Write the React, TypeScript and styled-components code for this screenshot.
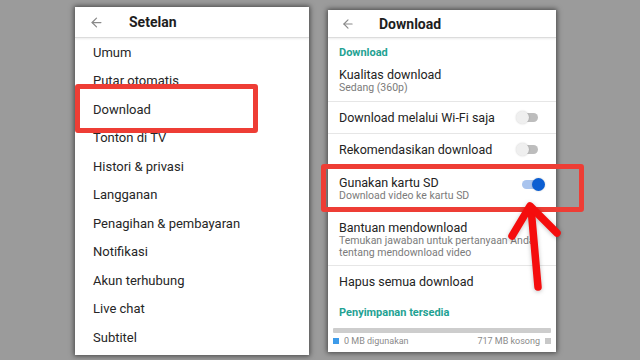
import styled, { createGlobalStyle } from 'styled-components'
import { ArrowLeft } from 'lucide-react'

const GlobalStyle = createGlobalStyle`
  html, body {
    margin: 0;
    padding: 0;
    background: #9b9b9b;
    font-family: Roboto, "Noto Sans", "Liberation Sans", sans-serif;
  }
`

const settings = [
  'Umum',
  'Putar otomatis',
  'Download',
  'Tonton di TV',
  'Histori & privasi',
  'Langganan',
  'Penagihan & pembayaran',
  'Notifikasi',
  'Akun terhubung',
  'Live chat',
  'Subtitel',
]

type Switch = 'none' | 'off' | 'on'

const downloadRows: { title: string; sub?: string[]; toggle: Switch; h: number; pt: number; divider: boolean }[] = [
  { title: 'Kualitas download', sub: ['Sedang (360p)'], toggle: 'none', h: 40, pt: 6, divider: true },
  { title: 'Download melalui Wi-Fi saja', toggle: 'off', h: 32, pt: 0, divider: true },
  { title: 'Rekomendasikan download', toggle: 'off', h: 32, pt: 0, divider: true },
  { title: 'Gunakan kartu SD', sub: ['Download video ke kartu SD'], toggle: 'on', h: 44, pt: 10, divider: true },
  {
    title: 'Bantuan mendownload',
    sub: ['Temukan jawaban untuk pertanyaan Anda', 'tentang mendownload video'],
    toggle: 'none',
    h: 56,
    pt: 11,
    divider: true,
  },
  { title: 'Hapus semua download', toggle: 'none', h: 32, pt: 0, divider: false },
]

export default function App() {
  return (
    <>
      <GlobalStyle />
      <Stage>
        <LeftPanel>
          <Header>
            <ArrowLeft size={15} color="#8a8a8a" strokeWidth={2} />
            <HeaderTitle>Setelan</HeaderTitle>
          </Header>
          {settings.map((s) => (
            <SettingItem key={s}>{s}</SettingItem>
          ))}
        </LeftPanel>

        <RightPanel>
          <Header $narrow>
            <ArrowLeft size={14} color="#8a8a8a" strokeWidth={2} />
            <HeaderTitle>Download</HeaderTitle>
          </Header>
          <SectionLabel>Download</SectionLabel>
          {downloadRows.map((r) => (
            <Row key={r.title} $h={r.h} $pt={r.pt} $divider={r.divider} $center={!r.sub}>
              <RowText>
                <RowTitle>{r.title}</RowTitle>
                {r.sub?.map((line) => (
                  <RowSub key={line}>{line}</RowSub>
                ))}
              </RowText>
              {r.toggle !== 'none' && (
                <Track $on={r.toggle === 'on'}>
                  <Thumb $on={r.toggle === 'on'} />
                </Track>
              )}
            </Row>
          ))}
          <SectionLabel $top={8}>Penyimpanan tersedia</SectionLabel>
          <StorageBar />
          <Legend>
            <LegendItem>
              <LegendSwatch $color="#3d9be9" />0 MB digunakan
            </LegendItem>
            <LegendItem>
              717 MB kosong
              <LegendSwatch $color="#c8c8c8" />
            </LegendItem>
          </Legend>
        </RightPanel>

        <Highlight $left={75} $top={84} $w={183} $h={49} />
        <Highlight $left={321} $top={164} $w={263} $h={48} />
        <ArrowMark viewBox="0 0 640 360" width="640" height="360">
          <g stroke="#f50d0d" strokeWidth="7.5" strokeLinecap="round" strokeLinejoin="round" fill="none">
            <line x1="531" y1="208" x2="538" y2="287" />
            <polyline points="512,236 530,206 557,233" />
          </g>
        </ArrowMark>
      </Stage>
    </>
  )
}

const Stage = styled.div`
  position: relative;
  width: 640px;
  height: 360px;
  overflow: hidden;
  display: flex;
  align-items: flex-start;
  padding-left: 75px;
  box-sizing: border-box;
  background: #9b9b9b;
`

const Panel = styled.div`
  background: #ffffff;
  box-shadow: 0 0 5px 1px rgba(0, 0, 0, 0.55);
  display: flex;
  flex-direction: column;
  overflow: hidden;
`

const LeftPanel = styled(Panel)`
  width: 234px;
  height: 348px;
  margin-top: 7px;
`

const RightPanel = styled(Panel)`
  width: 228px;
  height: 342px;
  margin-top: 10px;
  margin-left: 19px;
`

const Header = styled.div<{ $narrow?: boolean }>`
  display: flex;
  align-items: center;
  gap: ${(p) => (p.$narrow ? 24 : 25)}px;
  height: ${(p) => (p.$narrow ? 27 : 30)}px;
  padding-left: ${(p) => (p.$narrow ? 13 : 14)}px;
  border-bottom: 1.5px solid #dcdcdc;
  box-shadow: 0 1px 2px rgba(0, 0, 0, 0.08);
  flex-shrink: 0;
`

const HeaderTitle = styled.span`
  font-size: 14px;
  font-weight: 700;
  color: #1e1e1e;
`

const SettingItem = styled.div`
  height: 28.5px;
  display: flex;
  align-items: center;
  padding-left: 18px;
  font-size: 13px;
  color: #262626;
  flex-shrink: 0;
`

const SectionLabel = styled.div<{ $top?: number }>`
  font-size: 11px;
  font-weight: 700;
  color: #1fa293;
  padding: ${(p) => p.$top ?? 8}px 0 0 11px;
  line-height: 14px;
  height: ${(p) => 24 - (p.$top ?? 8) + 8}px;
  box-sizing: border-box;
  flex-shrink: 0;
`

const Row = styled.div<{ $h: number; $pt: number; $divider: boolean; $center: boolean }>`
  height: ${(p) => p.$h}px;
  box-sizing: border-box;
  padding: ${(p) => p.$pt}px 18px 0 11px;
  display: flex;
  align-items: ${(p) => (p.$center ? 'center' : 'flex-start')};
  justify-content: space-between;
  border-bottom: ${(p) => (p.$divider ? '1px solid #e6e6e6' : 'none')};
  flex-shrink: 0;
`

const RowText = styled.div`
  display: flex;
  flex-direction: column;
`

const RowTitle = styled.div`
  font-size: 12.5px;
  line-height: 14px;
  color: #232323;
`

const RowSub = styled.div`
  font-size: 10.5px;
  line-height: 11.5px;
  color: #7b7b7b;
`

const Track = styled.div<{ $on: boolean }>`
  position: relative;
  width: 20px;
  height: 9px;
  border-radius: 5px;
  background: ${(p) => (p.$on ? '#a9c4ee' : '#bdbdbd')};
  margin-top: ${(p) => (p.$on ? 4 : 0)}px;
  margin-right: ${(p) => (p.$on ? -4 : 0)}px;
`

const Thumb = styled.div<{ $on: boolean }>`
  position: absolute;
  top: -2px;
  left: ${(p) => (p.$on ? 10 : -2)}px;
  width: 13px;
  height: 13px;
  border-radius: 50%;
  background: ${(p) => (p.$on ? '#0b5ed2' : '#efefef')};
  box-shadow: 0 0 2px rgba(0, 0, 0, 0.2);
`

const StorageBar = styled.div`
  height: 5px;
  margin: 6px 5px 0 5px;
  background: #cdcdcd;
  border-radius: 1px;
  flex-shrink: 0;
`

const Legend = styled.div`
  display: flex;
  justify-content: space-between;
  padding: 3px 5px 0 5px;
  font-size: 9px;
  color: #8a8a8a;
`

const LegendItem = styled.div`
  display: flex;
  align-items: center;
  gap: 5px;
`

const LegendSwatch = styled.span<{ $color: string }>`
  width: 6px;
  height: 6px;
  background: ${(p) => p.$color};
  display: inline-block;
`

const Highlight = styled.div<{ $left: number; $top: number; $w: number; $h: number }>`
  position: absolute;
  left: ${(p) => p.$left}px;
  top: ${(p) => p.$top}px;
  width: ${(p) => p.$w}px;
  height: ${(p) => p.$h}px;
  border: 5px solid #ee3d35;
  border-radius: 3px;
  box-sizing: border-box;
`

const ArrowMark = styled.svg`
  position: absolute;
  left: 0;
  top: 0;
  pointer-events: none;
  filter: drop-shadow(0 1px 2px rgba(0, 0, 0, 0.25));
`
